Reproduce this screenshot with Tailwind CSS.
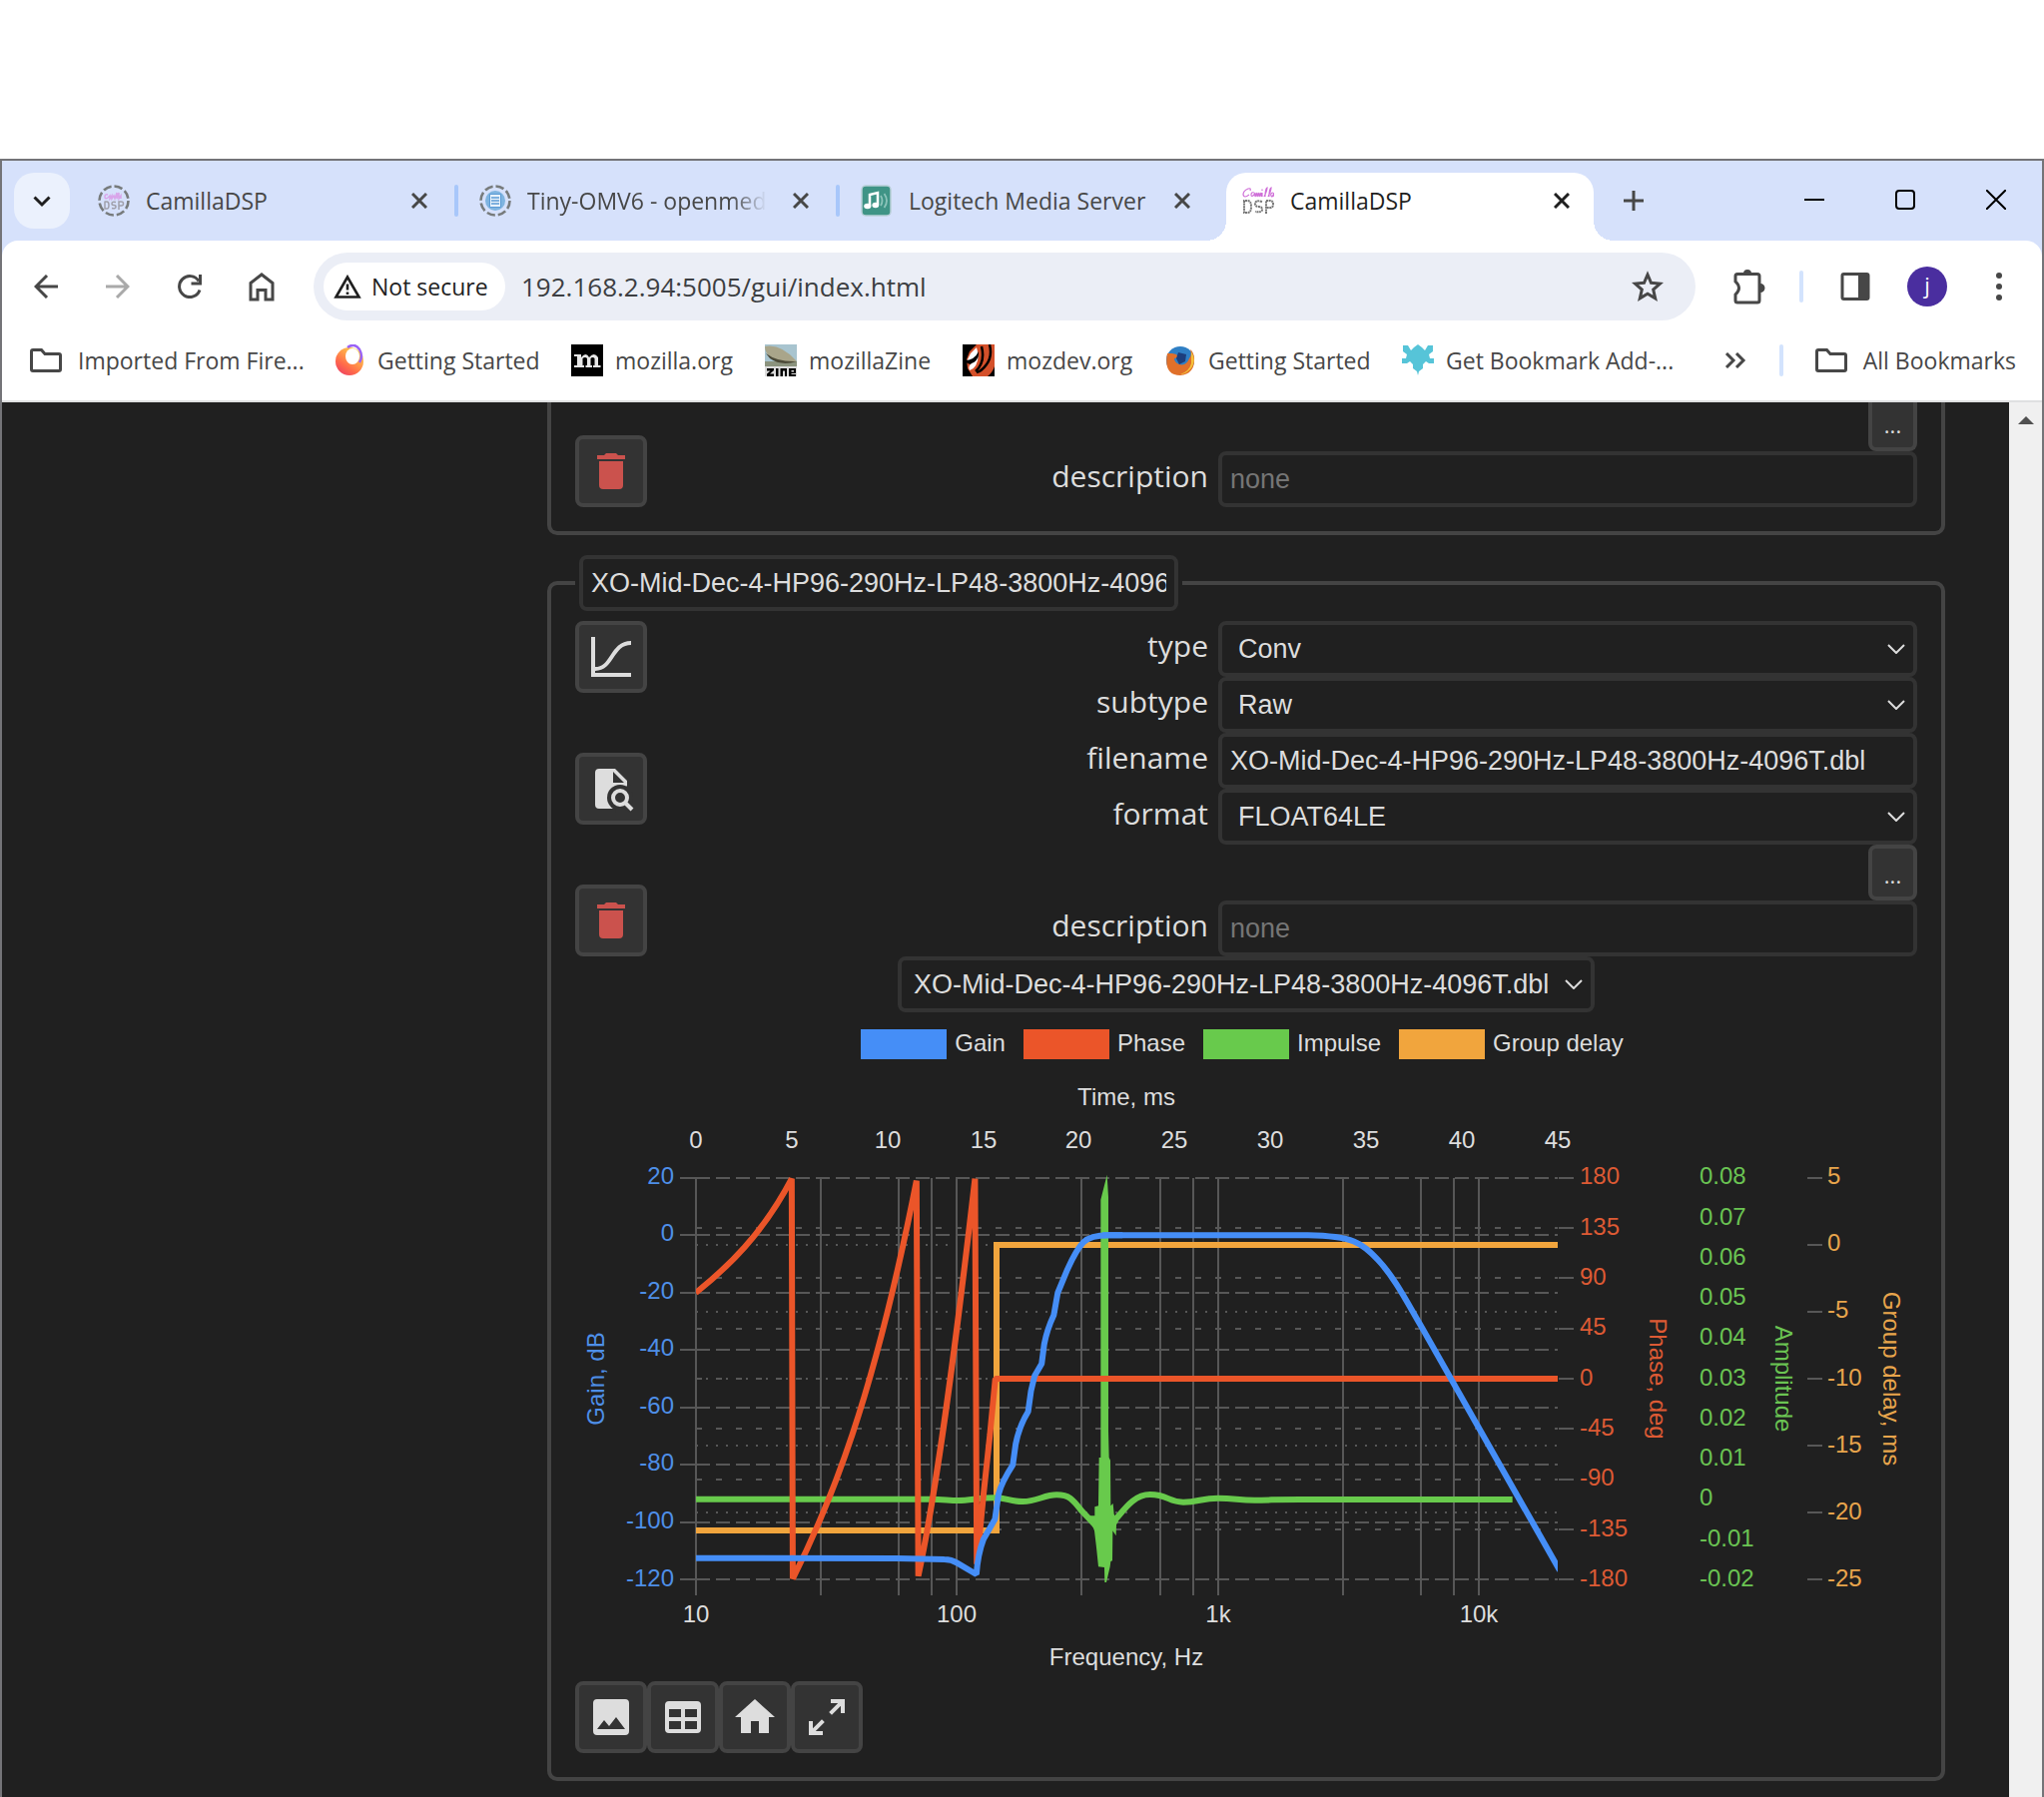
<!DOCTYPE html>
<html lang="en">
<head>
<meta charset="utf-8">
<title>CamillaDSP</title>
<script src="https://cdn.jsdelivr.net/npm/@tailwindcss/browser@4"></script>
</head>
<body class="min-h-screen bg-white pt-[159px] flex flex-col font-['Open_Sans',sans-serif]">
<div class="grow flex flex-col border-2 border-b-0 border-[#747478] bg-[#d6e1fb]">

  <!-- Tab strip -->
  <header class="h-20 pt-3 flex text-[23px] text-[#474747]">
    <button aria-label="Search tabs" class="ml-3 mr-3 size-14 rounded-[20px] bg-[#ebf1fd] grid place-items-center text-[#1f1f1f]">
      <svg class="size-6" viewBox="0 0 24 24" fill="none" stroke="currentColor" stroke-width="3"><path d="M4.500 8.500l7.500 7.500 7.500-7.500"/></svg>
    </button>
    <div class="w-[368px] h-14 pl-4 pr-[22px] flex items-center">
      <svg class="size-8 mr-4 shrink-0" viewBox="0 0 32 32"><circle cx="16" cy="16" r="14.500" fill="none" stroke="#777b7c" stroke-width="2.600" stroke-dasharray="8.400 3"/><path d="M10 10q-3-1-3 2t3 1l2-2v3l2-3v3l2-3 1 3 2-6v6l2-6v6l2-3v3" fill="none" stroke="#d9a5ea" stroke-width="1.500"/><path d="M7 17v7h2q2 0 2-3.500T9 17H6.500M18 17.500q-4-1-4 1.500 0 1.500 2 1.500t2 1.500q0 2.500-4 1.500M21 25v-8h2.500q2 0 2 2t-2 2H21" fill="none" stroke="#a0a0ac" stroke-width="1.500"/></svg>
      <span class="grow">CamillaDSP</span>
      <button aria-label="Close tab" class="size-4"><svg viewBox="0 0 16 16" stroke="currentColor" stroke-width="3"><path d="M1 1l14 14M15 1L1 15"/></svg></button>
    </div>
    <div class="w-[14px] h-14 flex items-center justify-center"><i class="w-1 h-8 rounded-full bg-[#a8c7fa]"></i></div>
    <div class="w-[368px] h-14 pl-4 pr-[22px] flex items-center">
      <svg class="size-8 mr-4 shrink-0" viewBox="0 0 32 32"><circle cx="16" cy="16" r="14.500" fill="none" stroke="#777b7c" stroke-width="2.600" stroke-dasharray="8.400 3"/><circle cx="16" cy="16" r="10" fill="#7fb4e0"/><path d="M10.500 9.500h11v13h-11z" fill="#e8f2fb" stroke="#5b9bd5"/><path d="M12 13h8M12 16h8M12 19h8" stroke="#5b9bd5" stroke-width="1.500"/></svg>
      <span class="w-60 overflow-hidden whitespace-nowrap mask-r-from-85%">Tiny-OMV6 - openmediavault</span>
      <button aria-label="Close tab" class="size-4 ml-auto shrink-0"><svg viewBox="0 0 16 16" stroke="currentColor" stroke-width="3"><path d="M1 1l14 14M15 1L1 15"/></svg></button>
    </div>
    <div class="w-[14px] h-14 flex items-center justify-center"><i class="w-1 h-8 rounded-full bg-[#a8c7fa]"></i></div>
    <div class="w-[368px] h-14 pl-4 pr-[22px] flex items-center">
      <svg class="size-8 mr-4 shrink-0" viewBox="0 0 32 32"><rect x="1" y="1" width="29" height="30" rx="4" fill="#3f9486" stroke="#b9cfd8" stroke-width="1.500"/><path d="M9 21V10l8-2v12" fill="none" stroke="#fff" stroke-width="2.500"/><ellipse cx="6.800" cy="21.500" rx="3.600" ry="2.800" fill="#fff"/><ellipse cx="14.800" cy="20.500" rx="3.400" ry="2.800" fill="#fff"/><path d="M20 11q3 5 0 10M23.500 9q5 7 0 14" fill="none" stroke="#8cc4ba" stroke-width="1.800"/></svg>
      <span class="grow whitespace-nowrap">Logitech Media Server</span>
      <button aria-label="Close tab" class="size-4"><svg viewBox="0 0 16 16" stroke="currentColor" stroke-width="3"><path d="M1 1l14 14M15 1L1 15"/></svg></button>
    </div>
    <div class="w-[14px]"></div>
    <div class="relative w-[368px] h-[68px] pl-4 pr-6 pb-3 flex items-center rounded-t-[20px] bg-white text-[#1f1f1f]">
      <i class="absolute -left-5 bottom-0 size-5 bg-[radial-gradient(circle_at_0_0,transparent_20px,white_20px)]"></i>
      <i class="absolute -right-5 bottom-0 size-5 bg-[radial-gradient(circle_at_100%_0,transparent_20px,white_20px)]"></i>
      <svg class="size-8 mr-4 shrink-0" viewBox="0 0 32 32"><path d="M8 6q1-3-2-2Q1 6 1 10q1 4 6 0M12 8q-3-1-3 2t3 0l1-2v4l2-4v4l2-4v4l2-4v4M20 8v4M20 4.500v1.500M22 12q3-6 3-9-2 1-2 9M26 12q3-6 3-9-2 1-2 9M31 8q-3 0-2 3t3-3v4" fill="none" stroke="#cf6fd8" stroke-width="1.200"/><g fill="none" stroke="#777" stroke-width="2" stroke-dasharray="2 .6"><path d="M2 16v12h3.500q3.500 0 3.500-6t-3.500-6H1M20 17q-7-2-7 2 0 3 3.500 3t3.500 3q0 3-7 2M24 29V16h4q3 0 3 3.500t-3 3.500h-4"/></g></svg>
      <span class="grow">CamillaDSP</span>
      <button aria-label="Close tab" class="size-4"><svg viewBox="0 0 16 16" stroke="currentColor" stroke-width="3"><path d="M1 1l14 14M15 1L1 15"/></svg></button>
    </div>
    <button aria-label="New tab" class="ml-[30px] size-5 mt-[18px]"><svg viewBox="0 0 20 20" stroke="currentColor" stroke-width="3"><path d="M10 0v20M0 10h20"/></svg></button>
    <div class="ml-auto mr-9 h-[54px] flex items-center gap-[71px] text-black">
      <button aria-label="Minimize"><svg class="size-5" viewBox="0 0 20 20" stroke="currentColor" stroke-width="2"><path d="M0 10h20"/></svg></button>
      <button aria-label="Maximize"><svg class="size-5" viewBox="0 0 20 20" fill="none" stroke="currentColor" stroke-width="2"><rect x="1" y="1" width="18" height="18" rx="3"/></svg></button>
      <button aria-label="Close window"><svg class="size-5" viewBox="0 0 20 20" stroke="currentColor" stroke-width="2"><path d="M0 0l20 20M20 0L0 20"/></svg></button>
    </div>
  </header>

  <!-- Toolbar -->
  <nav class="h-[162px] pt-3 bg-white rounded-t-[16px] border-b-2 border-[#dfe0e1] text-[#474747]">
    <div class="h-[68px] pl-2 pr-[7px] flex items-center">
      <button aria-label="Back" class="w-[72px] grid place-items-center"><svg class="size-6" viewBox="0 0 24 24" fill="none" stroke="currentColor" stroke-width="3"><path d="M24 12H2M13 1L2 12l11 11"/></svg></button>
      <button aria-label="Forward" class="w-[72px] grid place-items-center text-[#a9a9a9]"><svg class="size-6" viewBox="0 0 24 24" fill="none" stroke="currentColor" stroke-width="3"><path d="M0 12h22M11 1l11 11-11 11"/></svg></button>
      <button aria-label="Reload" class="w-[72px] grid place-items-center"><svg class="size-6" viewBox="0 0 24 24" fill="none" stroke="currentColor" stroke-width="3"><path d="M22 15.500A10.500 10.500 0 1 1 21 6.500M22.500 0v9H13.500"/></svg></button>
      <button aria-label="Home" class="w-[72px] grid place-items-center"><svg class="w-[26px] h-[30px]" viewBox="0 0 26 30" fill="none" stroke="currentColor" stroke-width="3"><path d="M2 11.500L13 3l11 8.500V28h-7v-9.500H9V28H2z"/></svg></button>
      <div class="ml-4 mr-4 grow h-[68px] pl-[10px] pr-8 flex items-center rounded-full bg-[#ebeef6]">
        <button class="w-[182px] h-12 pl-[10px] flex items-center gap-[10px] rounded-full bg-white text-[23px] font-medium text-[#1f1f1f] whitespace-nowrap">
          <svg class="w-7 h-6" viewBox="0 0 28 24" fill="none" stroke="currentColor" stroke-width="2.600"><path d="M14 2.500L2.500 22.500h23z"/><path d="M14 9.500v6M14 17.500v2.500"/></svg>Not secure
        </button>
        <label for="url" class="sr-only">Address</label>
        <input id="url" class="ml-4 grow h-12 text-[26px] text-[#3c3e42] bg-transparent outline-none" value="192.168.2.94:5005/gui/index.html">
        <button aria-label="Bookmark this page"><svg class="size-8" viewBox="0 0 32 32" fill="none" stroke="currentColor" stroke-width="3"><path d="M16 4l3.500 8.300 9 .8-6.800 6 2 8.800L16 23.200l-7.700 4.700 2-8.800-6.800-6 9-.8z"/></svg></button>
      </div>
      <button aria-label="Extensions" class="w-[72px] grid place-items-center"><svg class="w-9 h-[38px]" viewBox="0 -2 36 38" fill="none" stroke="currentColor" stroke-width="3"><path d="M8 4.500h20q2 0 2 2V31q0 2-2 2H8q-2 0-2-2v-6q7-6.500 0-13V6.500q0-2 2-2z"/><path d="M15 4a3 3 0 0 1 6 0zM31 15a3.500 3.500 0 0 1 0 7z" fill="currentColor" stroke-width="2"/></svg></button>
      <div class="w-9 grid place-items-center"><i class="w-1 h-8 rounded-full bg-[#d3e3fd]"></i></div>
      <button aria-label="Side panel" class="w-[72px] grid place-items-center"><svg class="w-[30px] h-7" viewBox="0 0 30 28"><rect x="2" y="1.500" width="26" height="25" rx="1.500" fill="none" stroke="currentColor" stroke-width="3"/><path d="M18 1h11v26H18z" fill="currentColor"/></svg></button>
      <button aria-label="Profile" class="w-[72px] grid place-items-center"><span class="size-10 rounded-full bg-[#4a2e9f] text-white text-[22px] leading-9 text-center">j</span></button>
      <button aria-label="Menu" class="w-[72px] grid place-items-center"><svg class="w-2 h-7" viewBox="0 0 8 28" fill="currentColor"><circle cx="4" cy="3" r="3"/><circle cx="4" cy="14" r="3"/><circle cx="4" cy="25" r="3"/></svg></button>
    </div>
    <div class="h-20 pl-7 pr-[26px] flex items-center text-[23px] whitespace-nowrap">
      <a href="#" class="w-[304px] flex items-center gap-4"><svg class="w-8 h-6" viewBox="0 0 32 24" fill="none" stroke="currentColor" stroke-width="3"><path d="M3 1.500h8.500l3.500 4h14q1.500 0 1.500 1.500v14q0 1.500-1.500 1.500H3q-1.500 0-1.500-1.500V3Q1.500 1.500 3 1.500z"/></svg>Imported From Fire...</a>
      <a href="#" class="w-[238px] flex items-center gap-3"><svg class="size-8" viewBox="0 0 32 32"><defs><linearGradient id="ff" x1="0" y1="1" x2=".7" y2="0"><stop offset="0" stop-color="#e8336a"/><stop offset=".4" stop-color="#ff6b4a"/><stop offset="1" stop-color="#ffd54a"/></linearGradient></defs><circle cx="16" cy="17" r="14" fill="url(#ff)"/><ellipse cx="19" cy="12" rx="7" ry="8" fill="#fff"/><path d="M14 3q7-5 12 2 4 7 0 13" fill="none" stroke="#9a62f5" stroke-width="2.500"/></svg>Getting Started</a>
      <a href="#" class="w-[194px] flex items-center gap-3"><svg class="size-8" viewBox="0 0 32 32"><path d="M0 0h32v32H0z"/><path d="M3 10h7v3q5-6 8 0 5-6 9 0v8h2.500v2H22v-2h1.500v-7q-2-2-4 0v7H21v2h-6.500v-2H16v-7q-2-2-4.500 0v7H13v2H3v-2h3V12H3z" fill="#e8e8e8"/></svg>mozilla.org</a>
      <a href="#" class="w-[198px] flex items-center gap-3"><svg class="size-8" viewBox="0 0 32 32"><path d="M0 0h32v22H0z" fill="#a8c4cf"/><path d="M0 17h32v6H0z" fill="#8b937e"/><path d="M0 2q16-3 32 15-16 3-27-5Q0 8 0 2z" fill="#a9a58a"/><path d="M1 9q12 9 31 8-16 5-27-3z" fill="#4c4a38"/><path d="M0 22h32v10H0z" fill="#ddd"/><path d="M2 24h7v2l-4 3.500h4V32H2v-2.500l3.500-3H2zM11 24h2.500v8H11zM15.500 24H22v8h-2v-5.500h-2V32h-2.500zM24 24h7v5h-4.500v1H31v2h-7zm2.500 2v1.500H29V26z"/></svg>mozillaZine</a>
      <a href="#" class="w-[202px] flex items-center gap-3"><svg class="size-8" viewBox="0 0 32 32"><path d="M0 0h32v32H0z" fill="#d4502a"/><path d="M0 0h14L7 7l-3 8 1 9 5 8H0z"/><path d="M14 3l-6 6-4 8 5 2 7-8z" fill="#fff"/><path d="M2 16q10 0 14-9 1 10-6 13-6 0-8-4z"/><path d="M9 19q6-2 7-9-1 14-9 16-2-4 2-7z" fill="#fff"/><path d="M19 2q4 16-6 25M27 0q3 12-3 20-5 7-10 8" fill="none" stroke="#000" stroke-width="2.500"/><path d="M32 22q-2 6-7 10h7z"/></svg>mozdev.org</a>
      <a href="#" class="w-[238px] flex items-center gap-3"><svg class="size-8" viewBox="0 0 32 32"><circle cx="16" cy="16" r="14" fill="#2f7fc4"/><path d="M3 9q-4 22 13 22 15-1 14-18-1-6-4-8 2 6-1 9-3 8-10 6-5-2-5-6l4-1-2-3-4-1q-3 0-5 0z" fill="#e0702a"/><path d="M27 7q6 10-1 18-5 5-10 5 9-3 11-11z" fill="#f5c23a"/><path d="M14 8l8 2-1 7-6 3-3-6z" fill="#1c3e7c"/></svg>Getting Started</a>
      <a href="#" class="flex items-center gap-3"><svg class="size-8" viewBox="0 0 32 32" fill="#56c4d8"><path d="M1 1h5l3 5 3-3 4-3 4 3 3 3 3-5h5v6l-4 3 1 4h4v5h-5l-3-2-3 3v4l-4 3-1 4-1-4-4-3v-4l-3-3-3 2H0v-5h4l1-4-4-3z"/></svg>Get Bookmark Add-...</a>
      <button aria-label="More bookmarks" class="ml-auto"><svg class="w-[22px] h-4" viewBox="0 0 22 16" fill="none" stroke="currentColor" stroke-width="3"><path d="M2 1l7 7-7 7M12 1l7 7-7 7"/></svg></button>
      <i class="ml-[33px] mr-8 w-1 h-8 rounded-full bg-[#d3e3fd]"></i>
      <a href="#" class="flex items-center gap-4"><svg class="w-8 h-6" viewBox="0 0 32 24" fill="none" stroke="currentColor" stroke-width="3"><path d="M3 1.500h8.500l3.500 4h14q1.500 0 1.500 1.500v14q0 1.500-1.500 1.500H3q-1.500 0-1.500-1.500V3Q1.500 1.500 3 1.500z"/></svg>All Bookmarks</a>
    </div>
  </nav>

  <!-- Page -->
  <div class="grow flex bg-[#202020]">
    <main class="grow pl-[546px] pr-16 pb-4 text-[#ddd]">

      <fieldset class="h-[133px] border-4 border-t-0 border-[#444] rounded-b-[10px] px-6 pb-6 flex items-end">
        <button aria-label="Delete filter" class="size-[72px] shrink-0 grid place-items-center rounded-lg border-4 border-[#444] bg-[#333] text-[#cb524d]"><svg class="size-12" viewBox="0 0 24 24" fill="currentColor"><path d="M6 19a2 2 0 0 0 2 2h8a2 2 0 0 0 2-2V7H6v12M19 4h-3.500l-1-1h-5l-1 1H5v2h14V4z"/></svg></button>
        <div class="grow grid grid-cols-[1fr_700px] gap-x-[10px] text-[30px]">
          <div class="col-span-2 flex justify-end"><button class="w-[49px] h-[49px] border-4 border-t-0 border-[#444] bg-[#333] rounded-b-lg text-[22px] leading-[45px]">...</button></div>
          <label for="d1" class="text-right leading-[50px]">description</label>
          <input id="d1" placeholder="none" class="h-14 px-2 border-4 border-[#333] rounded-lg font-['Liberation_Sans',sans-serif] text-[27px] placeholder:text-[#757575]">
        </div>
      </fieldset>

      <fieldset class="mt-5 border-4 border-[#444] rounded-[10px] px-6 pb-6">
        <legend class="px-1"><input aria-label="Filter name" value="XO-Mid-Dec-4-HP96-290Hz-LP48-3800Hz-4096T" class="block w-[600px] h-14 px-2 border-4 border-[#333] rounded-lg font-['Liberation_Sans',sans-serif] text-[27px]"></legend>
        <div class="pt-[10px] flex">
          <div class="flex flex-col justify-between">
            <button aria-label="Plot" class="size-[72px] grid place-items-center rounded-lg border-4 border-[#444] bg-[#333]"><svg class="size-10" viewBox="0 0 40 40" fill="none" stroke="currentColor" stroke-width="4"><path d="M2 0v38h38"/><path d="M4 32C22 32 20 6 40 6"/></svg></button>
            <button aria-label="Pick filter file" class="size-[72px] grid place-items-center rounded-lg border-4 border-[#444] bg-[#333]"><svg class="size-12" viewBox="0 0 24 24"><path d="M6 2a2 2 0 0 0-2 2v16a2 2 0 0 0 2 2h12a2 2 0 0 0 2-2V8l-6-6zM13 3.500L18.500 9H13z" fill="currentColor"/><circle cx="16.500" cy="16.500" r="6.500" fill="#333"/><path d="M14.500 19l7 5H14zM19 11l3-1v10z" fill="#333"/><circle cx="16.500" cy="16.500" r="3.500" fill="none" stroke="currentColor" stroke-width="2"/><path d="M19 19l3.500 3.500" stroke="currentColor" stroke-width="2"/></svg></button>
            <button aria-label="Delete filter" class="size-[72px] grid place-items-center rounded-lg border-4 border-[#444] bg-[#333] text-[#cb524d]"><svg class="size-12" viewBox="0 0 24 24" fill="currentColor"><path d="M6 19a2 2 0 0 0 2 2h8a2 2 0 0 0 2-2V7H6v12M19 4h-3.500l-1-1h-5l-1 1H5v2h14V4z"/></svg></button>
          </div>
          <div class="grow grid grid-cols-[1fr_700px] auto-rows-[56px] gap-x-[10px] text-[30px]">
            <label for="type" class="text-right leading-[50px]">type</label>
            <div class="grid items-center font-['Liberation_Sans',sans-serif] text-[27px]">
              <select id="type" class="col-start-1 row-start-1 appearance-none w-full h-14 px-4 border-4 border-[#333] rounded-lg bg-[#202020]"><option>Conv</option></select>
              <svg class="col-start-1 row-start-1 justify-self-end mr-3 w-[18px] h-[10px]" viewBox="0 0 18 10" fill="none" stroke="currentColor" stroke-width="2"><path d="M1 1l8 8 8-8"/></svg>
            </div>
            <label for="subtype" class="text-right leading-[50px]">subtype</label>
            <div class="grid items-center font-['Liberation_Sans',sans-serif] text-[27px]">
              <select id="subtype" class="col-start-1 row-start-1 appearance-none w-full h-14 px-4 border-4 border-[#333] rounded-lg bg-[#202020]"><option>Raw</option></select>
              <svg class="col-start-1 row-start-1 justify-self-end mr-3 w-[18px] h-[10px]" viewBox="0 0 18 10" fill="none" stroke="currentColor" stroke-width="2"><path d="M1 1l8 8 8-8"/></svg>
            </div>
            <label for="file" class="text-right leading-[50px]">filename</label>
            <input id="file" value="XO-Mid-Dec-4-HP96-290Hz-LP48-3800Hz-4096T.dbl" class="h-14 px-2 border-4 border-[#333] rounded-lg font-['Liberation_Sans',sans-serif] text-[27px]">
            <label for="format" class="text-right leading-[50px]">format</label>
            <div class="grid items-center font-['Liberation_Sans',sans-serif] text-[27px]">
              <select id="format" class="col-start-1 row-start-1 appearance-none w-full h-14 px-4 border-4 border-[#333] rounded-lg bg-[#202020]"><option>FLOAT64LE</option></select>
              <svg class="col-start-1 row-start-1 justify-self-end mr-3 w-[18px] h-[10px]" viewBox="0 0 18 10" fill="none" stroke="currentColor" stroke-width="2"><path d="M1 1l8 8 8-8"/></svg>
            </div>
            <div class="col-span-2 flex justify-end"><button class="w-[49px] h-14 pt-1 border-4 border-[#444] bg-[#333] rounded-lg text-[22px]">...</button></div>
            <label for="d2" class="text-right leading-[50px]">description</label>
            <input id="d2" placeholder="none" class="h-14 px-2 border-4 border-[#333] rounded-lg font-['Liberation_Sans',sans-serif] text-[27px] placeholder:text-[#757575]">
          </div>
        </div>

        <div class="w-[698px] mx-auto grid items-center font-['Liberation_Sans',sans-serif] text-[27px]">
          <select aria-label="Filter file" class="col-start-1 row-start-1 appearance-none w-full h-14 px-3 border-4 border-[#333] rounded-lg bg-[#202020]"><option>XO-Mid-Dec-4-HP96-290Hz-LP48-3800Hz-4096T.dbl</option></select>
          <svg class="col-start-1 row-start-1 justify-self-end mr-3 w-[18px] h-[10px]" viewBox="0 0 18 10" fill="none" stroke="currentColor" stroke-width="2"><path d="M1 1l8 8 8-8"/></svg>
        </div>

        <ul class="pt-[17px] pr-2 flex justify-center gap-[18px] font-['Liberation_Sans',sans-serif] text-[24px] leading-[28px]">
          <li class="flex gap-2"><i class="w-[86px] h-[30px] bg-[#458ef7]"></i>Gain</li>
          <li class="flex gap-2"><i class="w-[86px] h-[30px] bg-[#eb5529]"></i>Phase</li>
          <li class="flex gap-2"><i class="w-[86px] h-[30px] bg-[#68ca4c]"></i>Impulse</li>
          <li class="flex gap-2"><i class="w-[86px] h-[30px] bg-[#f1a53d]"></i>Group delay</li>
        </ul>

        <svg class="block w-full h-auto font-['Liberation_Sans',sans-serif] text-[24px]" viewBox="576 1061 1344 623" fill="#ddd">
          <g fill="none" stroke="#575757" stroke-width="2">
            <path d="M697 1180V1598M822 1180V1598M900 1180V1598M933 1180V1598M958 1180V1598M1083 1180V1598M1162 1180V1598M1195 1180V1598M1220 1180V1598M1345 1180V1598M1423 1180V1598M1456 1180V1598M1481 1180V1598"/>
            <path stroke-dasharray="14 6" d="M697 1180H1560M697 1237H1560M697 1295H1560M697 1352H1560M697 1410H1560M697 1467H1560M697 1525H1560M697 1582H1560"/>
            <path stroke-dasharray="6 14" d="M697 1230H1560M697 1280H1560M697 1331H1560M697 1381H1560M697 1431H1560M697 1482H1560M697 1532H1560"/>
            <path stroke-dasharray="2 8" d="M697 1247H1560M697 1314H1560M697 1381H1560M697 1448H1560M697 1515H1560"/>
            <path d="M681 1180h16M681 1237h16M681 1295h16M681 1352h16M681 1410h16M681 1467h16M681 1525h16M681 1582h16"/>
            <path d="M1561 1180h15M1561 1230h15M1561 1280h15M1561 1331h15M1561 1381h15M1561 1431h15M1561 1482h15M1561 1532h15M1561 1582h15"/>
            <path d="M1810 1180h15M1810 1247h15M1810 1314h15M1810 1381h15M1810 1448h15M1810 1515h15M1810 1582h15"/>
          </g>
          <defs><clipPath id="plot"><path d="M697 1170H1560V1590H697z"/></clipPath></defs>
          <g clip-path="url(#plot)" fill="none" stroke-width="6">
            <path stroke="#f1a53d" d="M697 1533H998V1247H1560"/>
            <g transform="translate(560 1120) scale(.35714 .33333)"><path vector-effect="non-scaling-stroke" stroke="#68ca4c" d="M383 1145H1040C1080 1145 1090 1149 1120 1149S1180 1141 1220 1141 1260 1152 1300 1152 1360 1132 1395 1132 1440 1145 1465 1180L1505 1225"/></g>
            <g transform="translate(1080 1120) scale(.33333)">
              <path vector-effect="non-scaling-stroke" stroke="#68ca4c" d="M100 1218C130 1190 160 1131 215 1131S270 1154 315 1154 370 1142 420 1142 480 1148 530 1148 600 1145 700 1146H1304"/>
              <path fill="#68ca4c" d="M86 170L67 245V1020L62 1020 60 1165 49 1168V1195L30 1195 48 1240 54 1290 60 1348 78 1350 79 1395H84L95 1348 97 1332 102 1330 103 1240 113 1255 114 1222 120 1212 107 1190 104 1158 97 1165 96 1028 92 1020 90 940V237z"/>
            </g>
            <g transform="translate(560 1120) scale(.35714 .33333)" stroke-linejoin="bevel">
              <path vector-effect="non-scaling-stroke" stroke="#eb5529" d="M383 525C470 450 570 350 652 182L655 1384C760 1160 880 850 1002 188L1007 1376C1060 1110 1110 700 1166 182L1171 1340 1190 1130 1208 950 1223 783H2800"/>
              <path vector-effect="non-scaling-stroke" stroke="#458ef7" d="M383 1322L950 1323 1080 1326Q1100 1326 1115 1336L1170 1371Q1174 1310 1190 1265L1222 1205 1232 1130Q1240 1095 1272 1042L1280 980Q1290 925 1315 882L1323 820 1333 775 1353 738 1360 680Q1368 635 1387 592L1398 525 1425 455Q1450 395 1470 373 1490 352 1540 352H1580"/>
            </g>
            <path stroke="#458ef7" d="M1104 1237.300H1310C1355 1238 1364 1245 1380 1262 1397 1280 1410 1306 1423 1328L1562 1573"/>
          </g>
          <g text-anchor="middle">
            <text x="1128" y="1107">Time, ms</text>
            <text x="697" y="1150">0</text><text x="793" y="1150">5</text><text x="889" y="1150">10</text><text x="985" y="1150">15</text><text x="1080" y="1150">20</text><text x="1176" y="1150">25</text><text x="1272" y="1150">30</text><text x="1368" y="1150">35</text><text x="1464" y="1150">40</text><text x="1560" y="1150">45</text>
            <text x="697" y="1625">10</text><text x="958" y="1625">100</text><text x="1220" y="1625">1k</text><text x="1481" y="1625">10k</text>
            <text x="1128" y="1668">Frequency, Hz</text>
          </g>
          <g fill="#4e8fe8">
            <g text-anchor="end"><text x="675" y="1186">20</text><text x="675" y="1243">0</text><text x="675" y="1301">-20</text><text x="675" y="1358">-40</text><text x="675" y="1416">-60</text><text x="675" y="1473">-80</text><text x="675" y="1531">-100</text><text x="675" y="1589">-120</text></g>
            <text transform="translate(605 1381) rotate(-90)" text-anchor="middle">Gain, dB</text>
          </g>
          <g fill="#dd5a34">
            <text x="1582" y="1186">180</text><text x="1582" y="1237">135</text><text x="1582" y="1287">90</text><text x="1582" y="1337">45</text><text x="1582" y="1388">0</text><text x="1582" y="1438">-45</text><text x="1582" y="1488">-90</text><text x="1582" y="1539">-135</text><text x="1582" y="1589">-180</text>
            <text transform="translate(1652 1381) rotate(90)" text-anchor="middle">Phase, deg</text>
          </g>
          <g fill="#6bc453">
            <text x="1702" y="1186">0.08</text><text x="1702" y="1227">0.07</text><text x="1702" y="1267">0.06</text><text x="1702" y="1307">0.05</text><text x="1702" y="1347">0.04</text><text x="1702" y="1388">0.03</text><text x="1702" y="1428">0.02</text><text x="1702" y="1468">0.01</text><text x="1702" y="1508">0</text><text x="1702" y="1549">-0.01</text><text x="1702" y="1589">-0.02</text>
            <text transform="translate(1778 1381) rotate(90)" text-anchor="middle">Amplitude</text>
          </g>
          <g fill="#e8a54c">
            <text x="1830" y="1186">5</text><text x="1830" y="1253">0</text><text x="1830" y="1320">-5</text><text x="1830" y="1388">-10</text><text x="1830" y="1455">-15</text><text x="1830" y="1522">-20</text><text x="1830" y="1589">-25</text>
            <text transform="translate(1886 1381) rotate(90)" text-anchor="middle">Group delay, ms</text>
          </g>
        </svg>

        <div class="flex">
          <button aria-label="Save image" class="size-[72px] grid place-items-center rounded-lg border-4 border-[#444] bg-[#333]"><svg class="size-12" viewBox="0 0 24 24" fill="currentColor"><path d="M8.500 13.500l2.500 3 3.500-4.500 4.500 6H5M21 19V5a2 2 0 0 0-2-2H5a2 2 0 0 0-2 2v14a2 2 0 0 0 2 2h14a2 2 0 0 0 2-2z"/></svg></button>
          <button aria-label="Save data" class="size-[72px] grid place-items-center rounded-lg border-4 border-[#444] bg-[#333]"><svg class="size-12" viewBox="0 0 24 24" fill="currentColor"><path d="M5 4h14a2 2 0 0 1 2 2v12a2 2 0 0 1-2 2H5a2 2 0 0 1-2-2V6a2 2 0 0 1 2-2M5 8v4h6V8H5M13 8v4h6V8h-6M5 14v4h6v-4H5M13 14v4h6v-4h-6z"/></svg></button>
          <button aria-label="Reset view" class="size-[72px] grid place-items-center rounded-lg border-4 border-[#444] bg-[#333]"><svg class="size-12" viewBox="0 0 24 24" fill="currentColor"><path d="M10 20v-6h4v6h5v-8h3L12 3 2 12h3v8h5z"/></svg></button>
          <button aria-label="Expand" class="size-[72px] grid place-items-center rounded-lg border-4 border-[#444] bg-[#333]"><svg class="size-12" viewBox="0 0 24 24" fill="currentColor"><path d="M10 21v-2H6.410l4.500-4.500-1.410-1.410-4.500 4.500V14H3v7h7M14.500 10.910l4.500-4.500V10h2V3h-7v2h3.590l-4.500 4.500 1.410 1.410z"/></svg></button>
        </div>
      </fieldset>
    </main>
    <div class="w-[33px] shrink-0 pt-[14px] flex justify-center items-start bg-[#f0f0f0]"><svg class="w-4 h-2" viewBox="0 0 16 8" fill="#505050"><path d="M8 0l8 8H0z"/></svg></div>
  </div>
</div>
</body>
</html>
